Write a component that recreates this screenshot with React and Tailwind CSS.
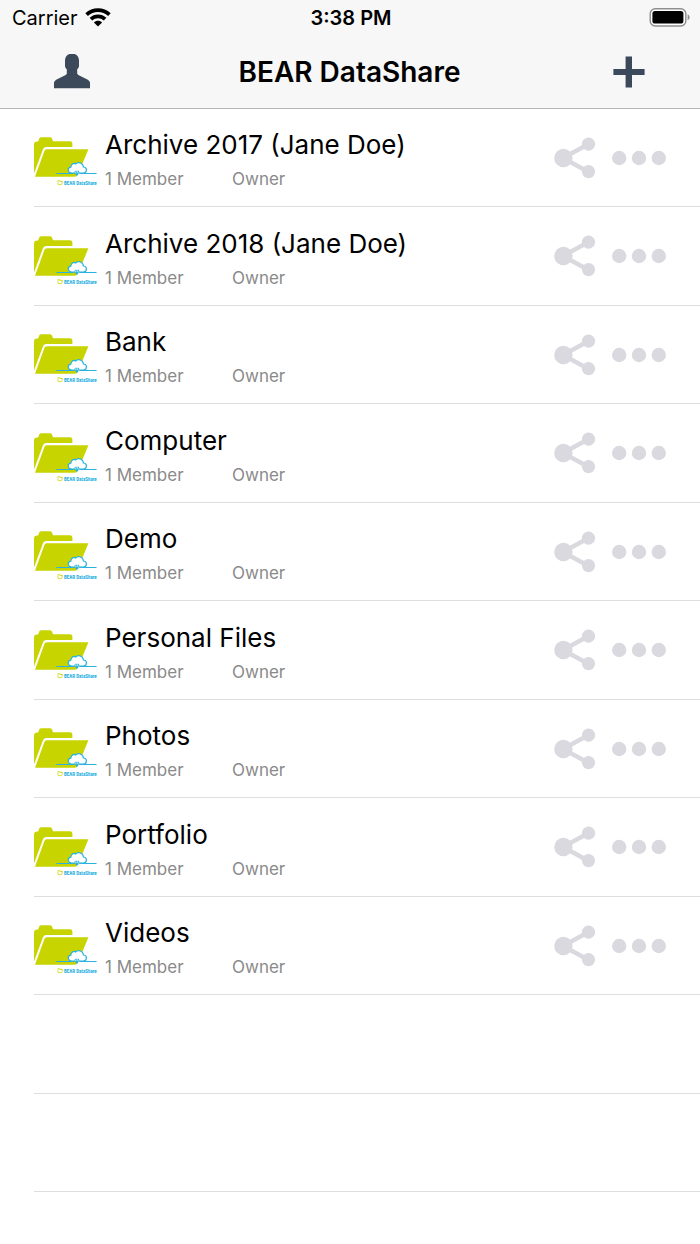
/**
 * App.jsx — BEAR DataShare mobile folder list.
 *
 * Sections:
 *  1. Status bar
 *  2. Navigation bar
 *  3. Folder list
 */

import React from 'react';

// ── Folder data ───────────────────────────────────────────────────────────────

const FOLDERS = [
  { name: 'Archive 2017 (Jane Doe)', members: 1, role: 'Owner' },
  { name: 'Archive 2018 (Jane Doe)', members: 1, role: 'Owner' },
  { name: 'Bank',                    members: 1, role: 'Owner' },
  { name: 'Computer',                members: 1, role: 'Owner' },
  { name: 'Demo',                    members: 1, role: 'Owner' },
  { name: 'Personal Files',          members: 1, role: 'Owner' },
  { name: 'Photos',                  members: 1, role: 'Owner' },
  { name: 'Portfolio',               members: 1, role: 'Owner' },
  { name: 'Videos',                  members: 1, role: 'Owner' },
];

const EMPTY_ROWS = ['empty-1', 'empty-2'];

// ── Icons ─────────────────────────────────────────────────────────────────────

function WifiIcon() {
  return (
    <svg width="26" height="20" viewBox="0 0 26 20" aria-hidden="true">
      <g fill="none" stroke="#000" strokeWidth="3.8">
        <path d="M1.6 6.6C8 0.6 18 0.6 24.4 6.6" />
        <path d="M5.9 11.2C9.9 7.4 16.1 7.4 20.1 11.2" />
      </g>
      <path d="M8.9 14.4C11.2 12.2 14.8 12.2 17.1 14.4L13 18.6Z" fill="#000" />
    </svg>
  );
}

function BatteryIcon() {
  return (
    <svg width="41" height="20" viewBox="0 0 41 20" aria-hidden="true">
      <rect x="1.2" y="0.8" width="35.6" height="17.2" rx="5" fill="#fff" stroke="#8e8e8e" strokeWidth="1.4" />
      <rect x="3.4" y="3" width="31" height="12.6" rx="2.6" fill="#000" />
      <path d="M38.6 6.2C41.2 7 41.2 11.4 38.6 12.2Z" fill="#8e8e8e" />
    </svg>
  );
}

function PersonIcon() {
  return (
    <svg width="36" height="36" viewBox="0 1 36 36" fill="#3c495b" aria-hidden="true">
      <path d="M18 0.6C22.6 0.6 25 3.6 25 7.6V12.6C25 14.4 24.4 15.4 23.2 16.2V20.4C23.6 21.6 24.4 22 25.8 22.8L33.4 26.6C35.4 27.8 36 28.8 36 30.6V35.2H0V30.6C0 28.8 0.6 27.8 2.6 26.6L10.2 22.8C11.6 22 12.6 21.6 12.8 20.4V16.2C11.6 15.4 11 14.4 11 12.6V7.6C11 3.6 13.4 0.6 18 0.6Z" />
    </svg>
  );
}

function PlusIcon() {
  return (
    <svg width="32" height="32" viewBox="0 0 32 32" fill="#3c495b" aria-hidden="true">
      <path d="M12.6 0.4H19V13H31.6V19H19V31.6H12.6V19H0.4V13H12.6Z" />
    </svg>
  );
}

function FolderIcon() {
  return (
    <svg width="64" height="50" viewBox="0 0 64 50" className="shrink-0" aria-hidden="true">
      <path d="M0 8.9Q0 5.6 3.2 5.6H4.2L5.2 2.4Q5.8 1.2 7.4 1.2H15.6Q17.4 1.2 18 2.6L19 5.2H36Q38.4 5.2 38.4 7.8V11H12.4Q9.8 11 9 13.2L0 37.4Z" fill="#c8d400" />
      <path d="M10.4 15Q11 13.2 13 13.2H54.4L44 38.6Q43 40.8 40.6 40.8H1Z" fill="#c8d400" />
      <path
        d="M37.6 37C33.6 36.8 33 31.8 36.8 31.2C37 27.8 40 26.8 41.6 28C44.2 25.2 49.2 27 49.4 31C53.4 31 53.4 37 49.4 37Z"
        fill="#fff"
      />
      <g fill="none" stroke="#29b2e0" strokeWidth="1.2">
        <path d="M40.6 37H37.6C33.6 36.8 33 31.8 36.8 31.2C37 27.8 40 26.8 41.6 28C44.2 25.2 49.2 27 49.4 31C53.4 31 53.4 37 49.4 37H45.2" />
        <path d="M22.4 37.5H39.8Q41.4 37.5 41.4 34.8M44.4 34.8Q44.4 37.5 46 37.5H62.6" strokeWidth="1" />
        <path d="M42.9 34.8V38.6M41.4 37.4L42.9 39L44.4 37.4" />
      </g>
      <path d="M24 44.4V48.6H27.6L28.6 45.6H25.6M24 44.6H25.8L26.4 45.2H28.2" fill="none" stroke="#c8d400" strokeWidth="0.7" />
      <text
        x="30"
        y="48.8"
        fill="#22aee0"
        fontFamily="'Liberation Sans Narrow', 'Roboto Condensed', 'Liberation Sans', sans-serif"
        fontSize="5"
        fontWeight="700"
      >
        BEAR DataShare
      </text>
    </svg>
  );
}

function ShareIcon() {
  return (
    <svg width="42" height="42" viewBox="0 0 42 42" fill="#d9d9df" aria-hidden="true">
      <path d="M34.6 7L9 21L34.6 35" fill="none" stroke="#d9d9df" strokeWidth="4.4" />
      <circle cx="9.4" cy="21" r="9.2" />
      <circle cx="34.5" cy="7.2" r="6.6" />
      <circle cx="34.5" cy="34.6" r="6.6" />
    </svg>
  );
}

function MoreIcon() {
  return (
    <svg width="54" height="16" viewBox="0 0 54 16" fill="#d9d9df" aria-hidden="true">
      <circle cx="7.2" cy="8" r="7.2" />
      <circle cx="27" cy="8" r="7.2" />
      <circle cx="46.8" cy="8" r="7.2" />
    </svg>
  );
}

// ── Status Bar ────────────────────────────────────────────────────────────────

function StatusBar() {
  return (
    <div className="grid h-9 grid-cols-[1fr_auto_1fr] items-center pl-3 pr-[10px] text-black">
      <div className="flex items-center gap-[7px] text-xl">
        <span>Carrier</span>
        <WifiIcon />
      </div>
      <span className="text-center text-xl font-semibold">3:38 PM</span>
      <div className="flex justify-end">
        <BatteryIcon />
      </div>
    </div>
  );
}

// ── Navigation Bar ────────────────────────────────────────────────────────────

function NavBar() {
  return (
    <nav className="grid h-[72px] grid-cols-[1fr_auto_1fr] items-center pl-[54px] pr-[55px]">
      <button type="button" aria-label="Account" className="justify-self-start">
        <PersonIcon />
      </button>
      <h1 className="text-[28px] font-semibold text-black">BEAR DataShare</h1>
      <button type="button" aria-label="Add folder" className="justify-self-end">
        <PlusIcon />
      </button>
    </nav>
  );
}

// ── Folder List ───────────────────────────────────────────────────────────────

function FolderRow({ name, members, role }) {
  return (
    <li className="flex items-center border-b border-[#dedee0] pr-[34px] odd:h-[98px] even:h-[99px]">
      <div className="flex min-w-0 flex-1 items-center gap-[7px] pt-[7px]">
        <FolderIcon />
        <div className="min-w-0 flex-1">
          <h2 className="truncate text-[26px] leading-9 text-black">{name}</h2>
          <p className="flex text-[17px] leading-8 text-[#8a8a8a]">
            <span className="w-[127px]">{members} Member</span>
            <span>{role}</span>
          </p>
        </div>
      </div>
      <div className="flex items-center gap-4">
        <button type="button" aria-label={`Share ${name}`}>
          <ShareIcon />
        </button>
        <button type="button" aria-label={`More options for ${name}`}>
          <MoreIcon />
        </button>
      </div>
    </li>
  );
}

// ── Page Component ────────────────────────────────────────────────────────────

export default function App() {
  return (
    <div className="min-h-screen bg-white font-['Inter','Liberation_Sans',sans-serif]">
      <header className="border-b border-[#b5b5b7] bg-[#f7f7f7]">
        <StatusBar />
        <NavBar />
      </header>

      <main>
        <ul className="pl-[34px]">
          {FOLDERS.map((folder) => (
            <FolderRow key={folder.name} {...folder} />
          ))}
          {EMPTY_ROWS.map((id) => (
            <li
              key={id}
              aria-hidden="true"
              className="border-b border-[#dedee0] odd:h-[98px] even:h-[99px]"
            />
          ))}
        </ul>
      </main>
    </div>
  );
}
